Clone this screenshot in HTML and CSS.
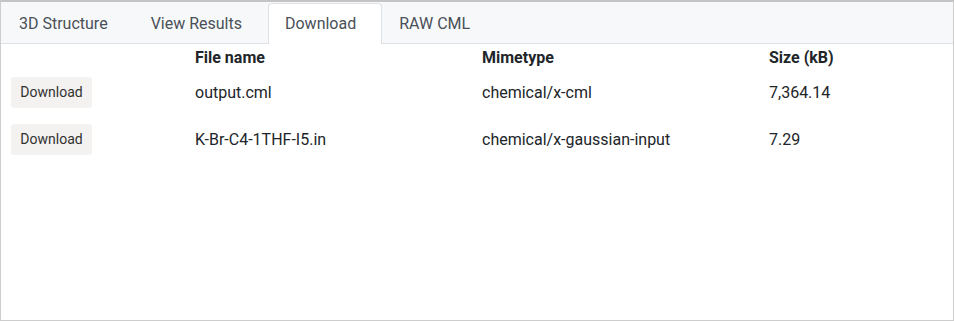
FILE: index.html
```html
<!DOCTYPE html>
<html>
<head>
<meta charset="utf-8">
<link rel="stylesheet" href="styles.css">
</head>
<body>
<div class="panel">
  <div class="tabs">
    <div class="tab">3D Structure</div>
    <div class="tab">View Results</div>
    <div class="tab active">Download</div>
    <div class="tab">RAW CML</div>
  </div>
  <div class="files">
    <div class="row head">
      <div class="cell"></div>
      <div class="cell">File name</div>
      <div class="cell">Mimetype</div>
      <div class="cell">Size (kB)</div>
    </div>
    <div class="row">
      <div class="cell"><button class="btn">Download</button></div>
      <div class="cell">output.cml</div>
      <div class="cell">chemical/x-cml</div>
      <div class="cell">7,364.14</div>
    </div>
    <div class="row">
      <div class="cell"><button class="btn">Download</button></div>
      <div class="cell">K-Br-C4-1THF-I5.in</div>
      <div class="cell">chemical/x-gaussian-input</div>
      <div class="cell">7.29</div>
    </div>
  </div>
</div>
</body>
</html>
```

FILE: styles.css
```css
html, body {
  margin: 0;
  padding: 0;
  background: #ffffff;
}

body {
  font-family: Roboto, "Liberation Sans", sans-serif;
  color: #212529;
}

.panel {
  box-sizing: border-box;
  width: 954px;
  height: 321px;
  border: 1px solid #cdcdcd;
  border-top: 2px solid #c4c4c4;
  background: #ffffff;
}

.tabs {
  display: flex;
  align-items: flex-end;
  height: 41px;
  background: #f7f8fa;
  border-bottom: 1px solid #dee2e6;
  padding-left: 1px;
}

.tab {
  box-sizing: border-box;
  height: 41px;
  margin-bottom: -1px;
  padding: 0 25px 1px 16px;
  border: 1px solid transparent;
  border-bottom: none;
  border-radius: 4px 4px 0 0;
  display: flex;
  align-items: center;
  font-size: 16px;
  color: #495057;
}

.tab.active {
  background: #ffffff;
  border-color: #dee2e6;
}

.files {
  display: flex;
  flex-direction: column;
  gap: 16px;
  padding: 2px 0 0 10px;
  font-size: 16px;
}

.row {
  display: grid;
  grid-template-columns: 184px 287px 287px 1fr;
  height: 31px;
}

.row.head {
  height: 22px;
  margin-bottom: -7px;
  font-weight: bold;
}

.cell {
  display: flex;
  align-items: center;
}

.btn {
  box-sizing: border-box;
  width: 81px;
  height: 31px;
  border: none;
  border-radius: 3px;
  background: #f3f2f1;
  color: #323130;
  font-family: Roboto, "Liberation Sans", sans-serif;
  font-size: 14px;
  padding: 0 0 1px 0;
}
```
